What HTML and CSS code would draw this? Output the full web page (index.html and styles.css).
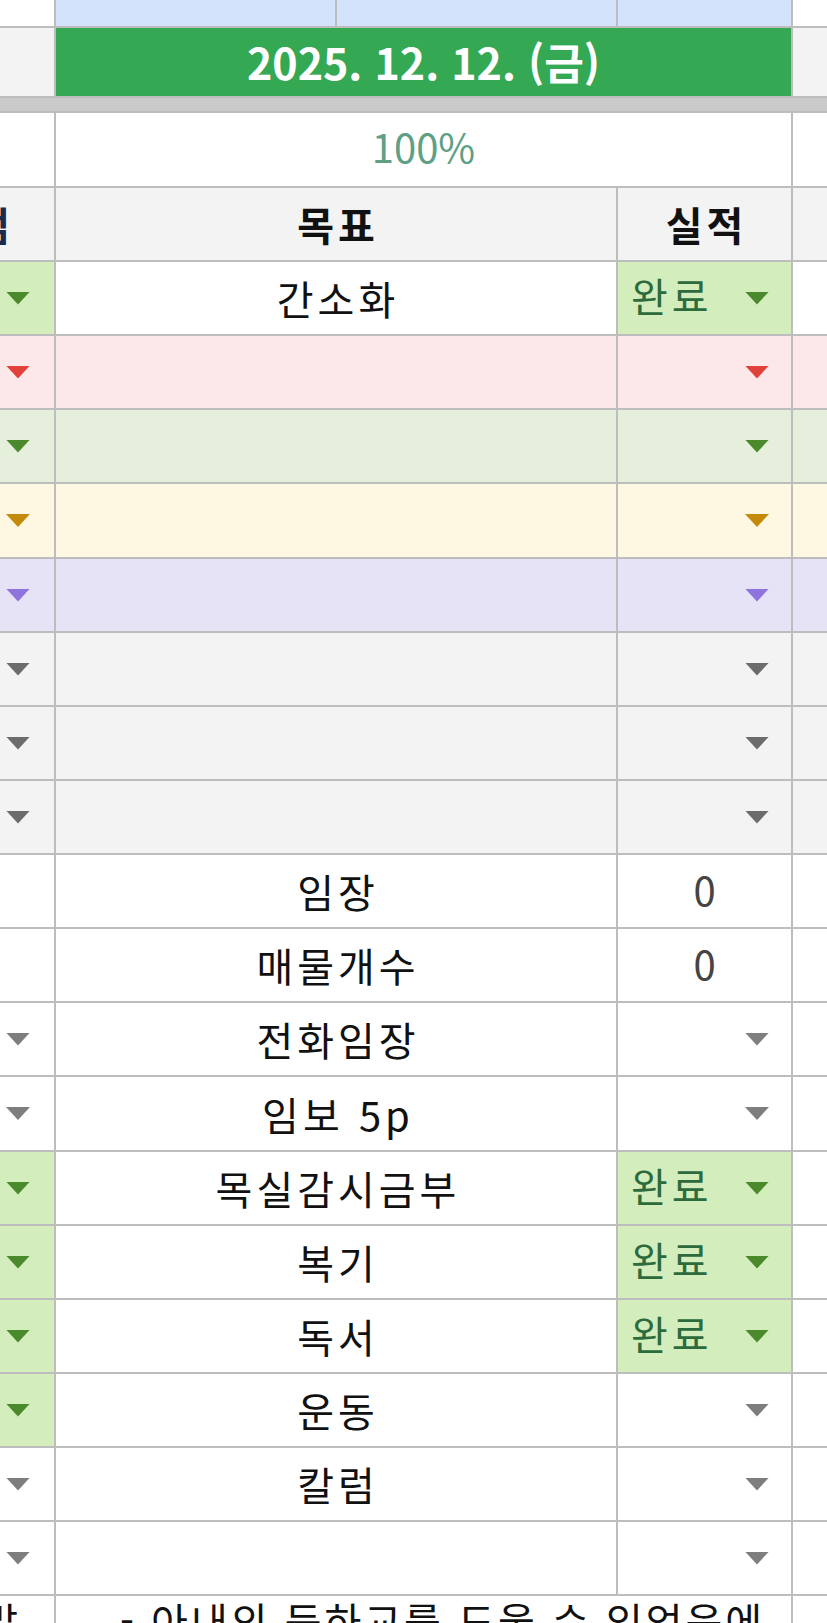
FILE: index.html
```html
<!DOCTYPE html>
<html lang="ko">
<head>
<meta charset="utf-8">
<title>Sheet</title>
<link rel="stylesheet" href="styles.css">
</head>
<body>
<div class="sheet">
  <!-- top blue row -->
  <div class="c"></div>
  <div class="c blue"></div>
  <div class="c blue"></div>
  <div class="c blue"></div>
  <div class="c"></div>

  <!-- date row -->
  <div class="c gray"></div>
  <div class="c date span3">2025. 12. 12. (금)</div>
  <div class="c gray"></div>

  <!-- thick separator -->
  <div class="band span5"></div>

  <!-- percent row -->
  <div class="c"></div>
  <div class="c pct span3">100%</div>
  <div class="c"></div>

  <!-- header row -->
  <div class="c gray clip"><span class="cut head-cut">점검</span></div>
  <div class="c gray head goal span2">목표</div>
  <div class="c gray head goal">실적</div>
  <div class="c gray"></div>

  <!-- 1 -->
  <div class="c chip lcell"><span class="tri t-green"></span></div>
  <div class="c goal span2">간소화</div>
  <div class="c chip res"><span class="done">완료</span><span class="tri t-green"></span></div>
  <div class="c"></div>

  <!-- 2 pink -->
  <div class="c pink lcell"><span class="tri t-red"></span></div>
  <div class="c pink span2"></div>
  <div class="c pink res end"><span class="tri t-red"></span></div>
  <div class="c pink"></div>

  <!-- 3 green -->
  <div class="c lgreen lcell"><span class="tri t-green"></span></div>
  <div class="c lgreen span2"></div>
  <div class="c lgreen res end"><span class="tri t-green"></span></div>
  <div class="c lgreen"></div>

  <!-- 4 yellow -->
  <div class="c yellow lcell"><span class="tri t-amber"></span></div>
  <div class="c yellow span2"></div>
  <div class="c yellow res end"><span class="tri t-amber"></span></div>
  <div class="c yellow"></div>

  <!-- 5 lavender -->
  <div class="c lav lcell"><span class="tri t-purple"></span></div>
  <div class="c lav span2"></div>
  <div class="c lav res end"><span class="tri t-purple"></span></div>
  <div class="c lav"></div>

  <!-- 6-8 gray -->
  <div class="c gray lcell"><span class="tri t-dgray"></span></div>
  <div class="c gray span2"></div>
  <div class="c gray res end"><span class="tri t-dgray"></span></div>
  <div class="c gray"></div>

  <div class="c gray lcell"><span class="tri t-dgray"></span></div>
  <div class="c gray span2"></div>
  <div class="c gray res end"><span class="tri t-dgray"></span></div>
  <div class="c gray"></div>

  <div class="c gray lcell"><span class="tri t-dgray"></span></div>
  <div class="c gray span2"></div>
  <div class="c gray res end"><span class="tri t-dgray"></span></div>
  <div class="c gray"></div>

  <!-- 9 -->
  <div class="c"></div>
  <div class="c goal span2">임장</div>
  <div class="c num">0</div>
  <div class="c"></div>

  <!-- 10 -->
  <div class="c"></div>
  <div class="c goal span2">매물개수</div>
  <div class="c num">0</div>
  <div class="c"></div>

  <!-- 11 -->
  <div class="c lcell"><span class="tri t-gray"></span></div>
  <div class="c goal span2">전화임장</div>
  <div class="c res end"><span class="tri t-gray"></span></div>
  <div class="c"></div>

  <!-- 12 -->
  <div class="c lcell"><span class="tri t-gray"></span></div>
  <div class="c goal span2">임보 5p</div>
  <div class="c res end"><span class="tri t-gray"></span></div>
  <div class="c"></div>

  <!-- 13 -->
  <div class="c chip lcell"><span class="tri t-green"></span></div>
  <div class="c goal span2">목실감시금부</div>
  <div class="c chip res"><span class="done">완료</span><span class="tri t-green"></span></div>
  <div class="c"></div>

  <!-- 14 -->
  <div class="c chip lcell"><span class="tri t-green"></span></div>
  <div class="c goal span2">복기</div>
  <div class="c chip res"><span class="done">완료</span><span class="tri t-green"></span></div>
  <div class="c"></div>

  <!-- 15 -->
  <div class="c chip lcell"><span class="tri t-green"></span></div>
  <div class="c goal span2">독서</div>
  <div class="c chip res"><span class="done">완료</span><span class="tri t-green"></span></div>
  <div class="c"></div>

  <!-- 16 -->
  <div class="c chip lcell"><span class="tri t-green"></span></div>
  <div class="c goal span2">운동</div>
  <div class="c res end"><span class="tri t-gray"></span></div>
  <div class="c"></div>

  <!-- 17 -->
  <div class="c lcell"><span class="tri t-gray"></span></div>
  <div class="c goal span2">칼럼</div>
  <div class="c res end"><span class="tri t-gray"></span></div>
  <div class="c"></div>

  <!-- 18 -->
  <div class="c lcell"><span class="tri t-gray"></span></div>
  <div class="c span2"></div>
  <div class="c res end"><span class="tri t-gray"></span></div>
  <div class="c"></div>

  <!-- partial bottom row -->
  <div class="c clip top"><span class="cut tail-cut">한마디 말</span></div>
  <div class="c span3 note">- 아내의 등하교를 도울 수 있었음에</div>
  <div class="c"></div>
</div>
</body>
</html>
```

FILE: styles.css
```css
html, body {
  margin: 0;
  padding: 0;
}

body {
  width: 827px;
  height: 1623px;
  overflow: hidden;
  background: #ffffff;
  font-family: "Noto Sans CJK KR", "Noto Sans", sans-serif;
}

.sheet {
  display: grid;
  grid-template-columns: 54px 279px 279px 173px 40px;
  grid-template-rows: 26px 68px 13px 73px 72px repeat(3, 72px) 73px repeat(7, 72px) 73px repeat(6, 72px) 60px;
  gap: 2px;
  background: #bdbdbd;
  width: 835px;
}

.c {
  background: #ffffff;
  display: flex;
  align-items: center;
  justify-content: center;
  overflow: hidden;
  font-size: 40px;
  line-height: 1;
  color: #111111;
  white-space: nowrap;
}

.span2 { grid-column: span 2; }
.span3 { grid-column: span 3; }
.span5 { grid-column: 1 / -1; }

.blue { background: #d3e3fc; }
.gray { background: #f3f3f3; }
.chip { background: #d4edbc; }
.pink { background: #fce8e8; }
.lgreen { background: #e5efdc; }
.yellow { background: #fef7e2; }
.lav { background: #e7e3f7; }

.band {
  background: #cacaca;
}

.date {
  background: #34a853;
  color: #ffffff;
  font-weight: 700;
  font-size: 43px;
  padding-bottom: 2px;
}

.pct {
  color: #5e9f86;
  font-size: 40px;
  padding-bottom: 7px;
}

.goal {
  letter-spacing: 4px;
  padding-left: 4px;
}

.head {
  font-weight: 700;
  color: #111111;
}

.clip {
  justify-content: flex-end;
}

.cut {
  flex: none;
}

.head-cut {
  font-weight: 700;
  color: #1d2a4c;
  margin-right: 44px;
}

.top {
  align-items: flex-start;
}

.tail-cut {
  margin-right: 36px;
  padding-top: 4px;
}

.note {
  justify-content: flex-start;
  align-items: flex-start;
  padding: 4px 0 0 64px;
  letter-spacing: 3px;
}

.lcell {
  justify-content: flex-start;
  padding-left: 6px;
}

.res {
  justify-content: space-between;
  padding: 0 22px 0 13px;
}

.res.end {
  justify-content: flex-end;
}

.done {
  color: #2d6b3c;
  padding-bottom: 6px;
  letter-spacing: 4px;
}

.num {
  color: #444444;
  padding-bottom: 4px;
}

.tri {
  display: block;
  width: 24px;
  height: 13px;
  clip-path: polygon(0 0, 100% 0, 50% 100%);
  flex: none;
}

.t-green { background: #4a8a2c; }
.t-red { background: #e2413b; }
.t-amber { background: #c48a0c; }
.t-purple { background: #8f74de; }
.t-dgray { background: #6c6c6c; }
.t-gray { background: #7e7e7e; }
```
